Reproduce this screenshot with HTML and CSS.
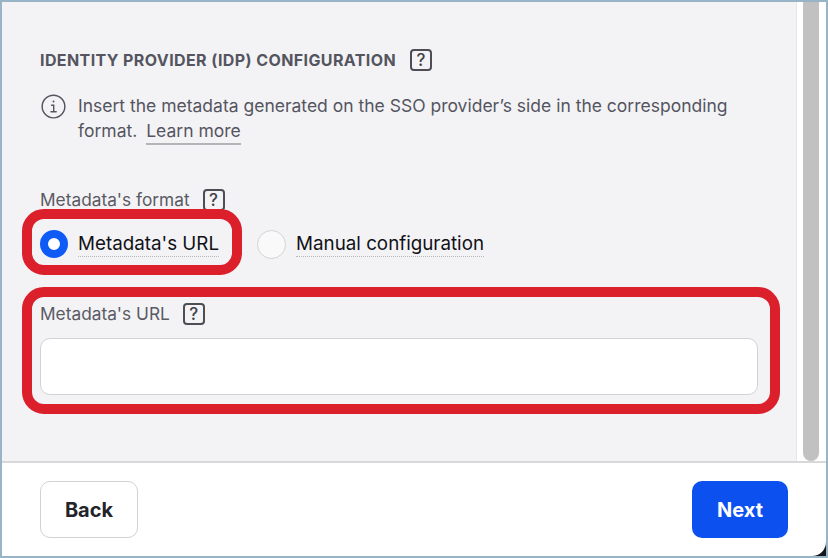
FILE: index.html
```html
<!DOCTYPE html>
<html lang="en">
<head>
<meta charset="utf-8">
<title>Identity provider configuration</title>
<link rel="stylesheet" href="styles.css">
</head>
<body>
<div class="window">
  <div class="main">
    <div class="content">
      <div class="title-row">
        <h2 class="title">Identity provider (IdP) configuration</h2>
        <span class="help">?</span>
      </div>
      <div class="info">
        <svg class="info-icon" viewBox="0 0 26 26" width="25" height="25" fill="none" stroke="#55555f" stroke-width="1.5" stroke-linecap="round">
          <circle cx="13" cy="13" r="11.8"/>
          <circle cx="13" cy="7.8" r="1" fill="#55555f" stroke="none"/>
          <path d="M11 11.6h2.2v6.6M10.4 18.4h5.4"/>
        </svg>
        <p class="info-text">Insert the metadata generated on the SSO provider’s side in the corresponding format. <a class="learn" href="#">Learn more</a></p>
      </div>
      <div class="label-row format-label">
        <span class="label">Metadata's format</span>
        <span class="help">?</span>
      </div>
      <div class="radios">
        <label class="radio ring">
          <span class="dot dot-on"></span>
          <span class="radio-text">Metadata's URL</span>
        </label>
        <label class="radio">
          <span class="dot"></span>
          <span class="radio-text">Manual configuration</span>
        </label>
      </div>
      <div class="field ring">
        <div class="label-row">
          <span class="label">Metadata's URL</span>
          <span class="help">?</span>
        </div>
        <div class="input"></div>
      </div>
    </div>
    <div class="track"><div class="thumb"></div></div>
  </div>
  <div class="footer">
    <button class="btn btn-back">Back</button>
    <button class="btn btn-next">Next</button>
  </div>
</div>
</body>
</html>
```
FILE: styles.css
```css
* { box-sizing: border-box; }
html, body { margin: 0; height: 100%; }
body {
  background: #98b5c8;
  font-family: Inter, "Liberation Sans", sans-serif;
  overflow: hidden;
  position: relative;
}
body::after {
  content: "";
  position: absolute;
  right: 2px;
  bottom: 2px;
  width: 24px;
  height: 16px;
  background: #14181c;
}
.window {
  position: relative;
  z-index: 1;
  width: 824px;
  height: 554px;
  margin: 2px 0 0 2px;
  background: #fff;
  border-bottom-right-radius: 14px;
  display: flex;
  flex-direction: column;
  overflow: hidden;
}
.main { height: 459px; display: flex; }
.content {
  flex: 1;
  background: #f3f3f6;
  border-right: 1px solid #e6e6e8;
  padding: 46px 38px 0;
}
.title-row { display: flex; align-items: center; gap: 14px; height: 24px; }
.title {
  margin: 0;
  font-size: 16px;
  font-weight: 700;
  letter-spacing: 0.4px;
  text-transform: uppercase;
  color: #55555f;
  line-height: 24px;
  white-space: nowrap;
}
.help {
  width: 22px;
  height: 22px;
  border: 2px solid #4d4d56;
  border-radius: 4px;
  font-size: 17px;
  font-weight: 500;
  line-height: 18px;
  text-align: center;
  color: #3f3f47;
  flex: none;
}
.info { display: flex; gap: 12px; margin-top: 21px; padding-left: 1px; }
.info-icon { flex: none; margin-top: 1px; }
.info-text {
  margin: 0;
  width: 680px;
  font-size: 17.5px;
  line-height: 25px;
  color: #55555f;
}
.learn {
  color: #55555f;
  text-decoration: none;
  border-bottom: 2px solid #b4b4b8;
  padding-bottom: 2px;
  margin-left: 4px;
}
.label-row { display: flex; align-items: center; gap: 13px; }
.format-label { margin-top: 46px; }
.label { font-size: 17.3px; line-height: 22px; color: #5a5a63; }
.radios { display: flex; gap: 38px; margin-top: 19px; }
.radio { display: flex; align-items: center; gap: 10px; height: 28px; }
.dot {
  width: 29px;
  height: 29px;
  border-radius: 50%;
  border: 1px solid #d2d2d4;
  background: #f9f9fa;
  flex: none;
}
.dot-on { width: 28px; height: 28px; border: 8px solid #0f5bf5; background: #fff; }
.radio-text {
  font-size: 18.8px;
  line-height: 24px;
  color: #111116;
  border-bottom: 1px dotted #b8b8bc;
}
.ring { position: relative; }
.ring::after {
  content: "";
  position: absolute;
  border: 10px solid #db1f2b;
  border-radius: 22px;
  pointer-events: none;
}
.radio.ring::after { inset: -21px -23px -17px -18px; }
.field { margin-top: 44px; }
.field.ring::after { inset: -15px -22px -19px -18px; }
.field .label-row { height: 24px; }
.input {
  margin-top: 12px;
  height: 57px;
  background: #fff;
  border: 1px solid #d2d2d4;
  border-radius: 10px;
}
.track { width: 29px; background: #fff; padding: 0 6px 0 6px; flex: none; }
.thumb { height: 100%; width: 16px; background: #c1c1c1; border-radius: 0 0 8px 8px; }
.footer {
  flex: 1;
  border-top: 2px solid #d8d8da;
  display: flex;
  justify-content: space-between;
  align-items: flex-start;
  padding: 18px 38px 0;
}
.btn {
  height: 57px;
  border-radius: 10px;
  font-family: inherit;
  font-size: 20px;
  font-weight: 700;
}
.btn-back { width: 98px; background: #fff; border: 1px solid #d2d2d4; color: #23232b; }
.btn-next { width: 96px; background: #0d50f0; border: 0; color: #fff; }
```
